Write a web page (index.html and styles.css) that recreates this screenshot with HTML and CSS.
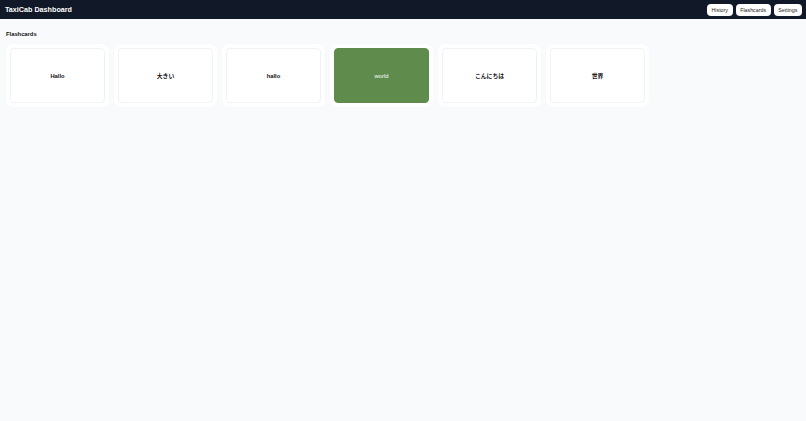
FILE: index.html
```html
<!DOCTYPE html>
<html lang="ja">
<head>
<meta charset="utf-8">
<title>TaxiCab Dashboard</title>
<link rel="stylesheet" href="styles.css">
</head>
<body>
<header class="topbar">
  <div class="brand">TaxiCab Dashboard</div>
  <nav class="nav">
    <button class="nav-btn">History</button>
    <button class="nav-btn">Flashcards</button>
    <button class="nav-btn">Settings</button>
  </nav>
</header>
<main class="content">
  <h2 class="section-title">Flashcards</h2>
  <div class="cards">
    <div class="card"><div class="card-face">Hallo</div></div>
    <div class="card"><div class="card-face">大きい</div></div>
    <div class="card"><div class="card-face">hallo</div></div>
    <div class="card"><div class="card-face active">world</div></div>
    <div class="card"><div class="card-face">こんにちは</div></div>
    <div class="card"><div class="card-face">世界</div></div>
  </div>
</main>
</body>
</html>
```
FILE: styles.css
```css
* { box-sizing: border-box; }
html, body { margin: 0; padding: 0; }
body {
  background: #f9fafb;
  font-family: "Liberation Sans", Arial, "Noto Sans CJK JP", sans-serif;
  color: #111111;
  width: 806px;
  height: 421px;
  overflow: hidden;
}
.topbar {
  height: 19px;
  background: #111827;
  display: flex;
  align-items: center;
  justify-content: space-between;
  padding: 0 4px 0 5px;
}
.brand {
  color: #ffffff;
  font-weight: bold;
  font-size: 7.2px;
}
.nav { display: flex; gap: 3px; }
.nav-btn {
  background: #ffffff;
  border: none;
  border-radius: 4px;
  font-family: inherit;
  font-size: 5.3px;
  color: #222222;
  height: 12px;
  padding: 0 4.6px;
  margin: 0;
}
.content { padding: 11px 6px; }
.section-title {
  margin: 0 0 6px 0;
  font-size: 5.8px;
  font-weight: bold;
  line-height: 8px;
  color: #111111;
}
.cards { display: flex; gap: 5px; }
.card {
  width: 103px;
  height: 63px;
  background: #ffffff;
  border-radius: 6px;
  padding: 4px;
  box-shadow: 0 0 1px rgba(0,0,0,0.06);
}
.card-face {
  height: 100%;
  border: 1px solid #f1f2f4;
  border-radius: 4px;
  display: flex;
  align-items: center;
  justify-content: center;
  font-size: 5.8px;
  font-weight: bold;
  color: #111111;
}
.card-face.active {
  background: #5f8b4c;
  border-color: #5f8b4c;
  color: #ffffff;
  font-weight: normal;
}
```
